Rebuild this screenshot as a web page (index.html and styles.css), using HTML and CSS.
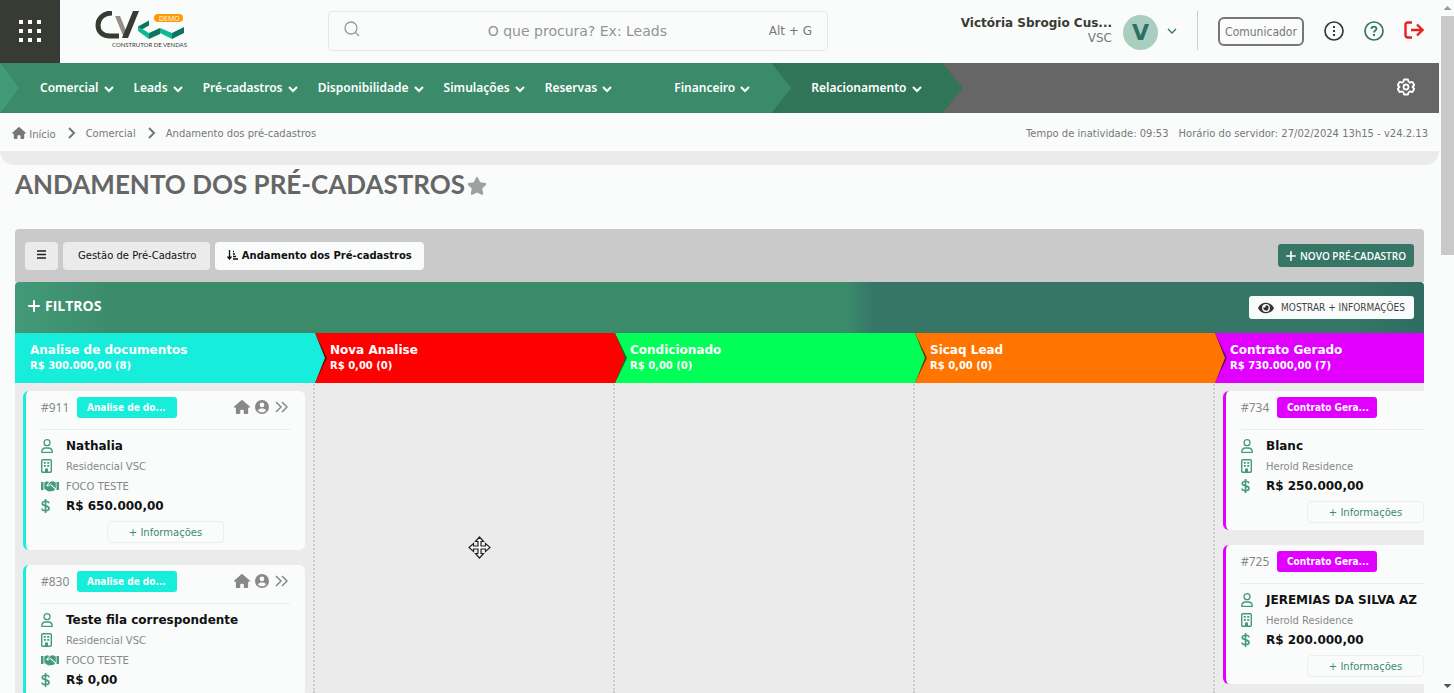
FILE: index.html
```
<!DOCTYPE html>
<html lang="pt-br">
<head>
    <meta charset="utf-8">
    <title>Andamento dos pré-cadastros</title>
    <link rel="stylesheet" href="styles.css">
</head>
<body>
    <svg class="sprite" aria-hidden="true">
        <symbol id="down" viewBox="0 0 10 8"><path d="M1 2l4 4 4-4" fill="none" stroke="currentColor" stroke-width="2"/></symbol>
        <symbol id="right" viewBox="0 0 8 12"><path d="M1 1l5 5-5 5" fill="none" stroke="currentColor" stroke-width="2"/></symbol>
        <symbol id="plus" viewBox="0 0 12 12"><path d="M6 1v10M1 6h10" fill="none" stroke="currentColor" stroke-width="2" stroke-linecap="round"/></symbol>
        <symbol id="home" viewBox="0 0 576 512"><path fill="currentColor" d="M575.8 255.5c0 18-15 32.1-32 32.1l-32 0 .7 160.2c0 2.7-.2 5.4-.5 8.1l0 16.2c0 22.1-17.9 40-40 40l-16 0c-1.1 0-2.2 0-3.3-.1c-1.4 .1-2.8 .1-4.2 .1L416 512l-24 0c-22.1 0-40-17.9-40-40l0-24 0-64c0-17.7-14.3-32-32-32l-64 0c-17.7 0-32 14.3-32 32l0 64 0 24c0 22.1-17.9 40-40 40l-24 0-31.9 0c-1.5 0-3-.1-4.5-.2c-1.2 .1-2.4 .2-3.6 .2l-16 0c-22.1 0-40-17.9-40-40l0-112c0-.9 0-1.9 .1-2.8l0-69.7-32 0c-18 0-32-14-32-32.1c0-9 3-17 10-24L266.4 8c7-7 15-8 22-8s15 2 21 7L564.8 231.5c8 7 12 15 11 24z"/></symbol>
        <symbol id="account" viewBox="0 0 14 14"><path fill="currentColor" fill-rule="evenodd" d="M7 0a7 7 0 1 1 0 14A7 7 0 0 1 7 0zM7 2.6a2.3 2.3 0 1 0 0 4.600a2.3 2.3 0 0 0 0-4.600zM2.900 10.200C3.700 11.700 5.200 12.300 7 12.300s3.300-.6 4.100-2.100C10.300 9 9 8.500 7 8.500S3.700 9 2.900 10.200z"/></symbol>
        <symbol id="more" viewBox="0 0 13 12"><path d="M1 1l5 5-5 5M7 1l5 5-5 5" fill="none" stroke="currentColor" stroke-width="1.500"/></symbol>
        <symbol id="person" viewBox="0 0 12 14"><g fill="none" stroke="currentColor" stroke-width="1.300"><circle cx="6" cy="3.700" r="3"/><path d="M.7 13.300c0-2.800 1.800-4.300 4-4.300h2.600c2.200 0 4 1.500 4 4.300z" stroke-linejoin="round"/></g></symbol>
        <symbol id="building" viewBox="0 0 11 14" preserveAspectRatio="xMinYMid"><rect x=".7" y=".7" width="9.600" height="12.600" rx="1" fill="none" stroke="currentColor" stroke-width="1.400"/><path fill="currentColor" d="M2.800 3h2v1.700h-2zM6.200 3h2v1.700h-2zM2.800 6h2v1.700h-2zM6.200 6h2v1.700h-2zM4 9.500h3V13H4z"/></symbol>
        <symbol id="handshake" viewBox="0 0 18 11"><path fill="currentColor" d="M0 1h2.500v8H0zM15.500 1H18v8h-2.500zM3.300 1.500L6 .3l2.500.8-3 3c-.5 1 1 1.800 2 1.100l1.800-1.200 4.500 4c.5.9-.4 1.500-1 1.200-.2.900-1.200 1.100-1.800.6-.5.8-1.500.8-2 .3-.9.700-2 .3-2.800-.4L3.300 7.700zM9.500.8l2.600-.5 2.700 1.200v6L9.700 3 8 4.200c-.5.3-1.100.1-1-.3z"/></symbol>
        <symbol id="dollar" viewBox="0 0 9 14" preserveAspectRatio="xMinYMid"><path d="M4.500 0v14M8 4.200C7.600 2.800 6.300 2.300 4.600 2.300 2.800 2.300 1.200 3 1.200 4.600c0 3.300 6.800 1.300 6.800 4.700 0 1.600-1.600 2.400-3.500 2.400C2.600 11.700 1.100 11 .8 9.600" fill="none" stroke="currentColor" stroke-width="1.600"/></symbol>
    </svg>

    <div class="page">
        <header class="header">
            <button class="apps" aria-label="Aplicativos">
                <svg width="24" height="24" viewBox="0 0 24 24" fill="#fff"><path d="M1 1h4v4H1zM10 1h4v4h-4zM19 1h4v4h-4zM1 10h4v4H1zM10 10h4v4h-4zM19 10h4v4h-4zM1 19h4v4H1zM10 19h4v4h-4zM19 19h4v4h-4z"/></svg>
            </button>
            <a class="logo" href="#">
                <svg width="96" height="38" viewBox="0 0 96 38">
                    <path d="M17 2C8 2 3 8 3 14c0 8 6 11 12 11h9" fill="none" stroke="#383b34" stroke-width="5"/>
                    <path d="M20 5h5l7 17-3 5z" fill="#968d8b"/>
                    <path d="M38 0h6L33 27h-6z" fill="#383b34"/>
                    <path d="M43 15.500l11-6v5L46 19z" fill="#0a7560"/>
                    <path d="M43 15.500l11 6.500v6L43 20z" fill="#0cba93"/>
                    <path d="M54 22l11-5v6l-11 5z" fill="#0a7560"/>
                    <path d="M65 17l12 5v6l-12-6z" fill="#0cba93"/>
                    <path d="M77 22l12-6v6l-12 6z" fill="#0a7560"/>
                    <rect x="59" y="3" width="29" height="8" rx="4" fill="#f90"/>
                    <text class="logo-tag" x="64" y="10" fill="#fff">DEMO</text>
                    <text class="logo-name" x="17" y="36" fill="#383b34">CONSTRUTOR DE VENDAS</text>
                </svg>
            </a>
            <label class="search">
                <svg width="16" height="16" viewBox="0 0 16 16" fill="none" stroke="#999" stroke-width="1.300"><circle cx="7" cy="7" r="6"/><path d="M11 11l4 4"/></svg>
                <input type="text" placeholder="O que procura? Ex: Leads" aria-label="Procurar">
                <span>Alt + G</span>
            </label>
            <div class="user">
                <div class="user-name">
                    <strong>Victória Sbrogio Cus...</strong>
                    <span>VSC</span>
                </div>
                <span class="avatar">V</span>
                <svg class="user-arrow" width="10" height="6" viewBox="0 0 10 6" fill="none" stroke="#357667" stroke-width="1.300"><path d="M1 1l4 4 4-4"/></svg>
            </div>
            <button class="comunicador">Comunicador</button>
            <button class="icon-button" aria-label="Opções"><svg width="20" height="20" viewBox="0 0 20 20"><circle cx="10" cy="10" r="9" fill="none" stroke="#383838" stroke-width="1.700"/><path d="M9 5h2v2H9zM9 9h2v2H9zM9 13h2v2H9z" fill="#383838"/></svg></button>
            <button class="icon-button" aria-label="Ajuda"><svg width="20" height="20" viewBox="0 0 20 20" fill="none" stroke="#357667" stroke-width="1.700"><circle cx="10" cy="10" r="9"/><path d="M7.500 8c0-3 5-3 5-.2 0 1.700-2.500 1.700-2.500 3.700" stroke-width="1.800"/><path d="M10 13v2" stroke-width="2"/></svg></button>
            <button class="icon-button" aria-label="Sair"><svg width="20" height="18" viewBox="0 0 20 18" fill="none" stroke="#e82020" stroke-width="2.400"><path d="M8 1.500H4q-2.500 0-2.500 2.500v10q0 2.500 2.500 2.500h4"/><path d="M7 9h12M13 3.500L18.500 9 13 14.500"/></svg></button>
        </header>

        <nav class="nav">
            <div class="nav-group">
                <a href="#">Comercial <svg><use href="#down"/></svg></a>
                <a href="#">Leads <svg><use href="#down"/></svg></a>
                <a href="#">Pré-cadastros <svg><use href="#down"/></svg></a>
                <a href="#">Disponibilidade <svg><use href="#down"/></svg></a>
                <a href="#">Simulações <svg><use href="#down"/></svg></a>
                <a href="#">Reservas <svg><use href="#down"/></svg></a>
                <a class="financeiro" href="#">Financeiro <svg><use href="#down"/></svg></a>
            </div>
            <div class="nav-group nav-dark">
                <a href="#">Relacionamento <svg><use href="#down"/></svg></a>
            </div>
            <button class="settings" aria-label="Configurações">
                <svg width="18" height="18" viewBox="0 0 18 18" fill="none" stroke="#fff" stroke-width="1.800"><path d="M7 1.500h4l.6 2.300 1.500.8 2.200-.8 2 3.400L15.500 9l1.800 1.800-2 3.400-2.200-.8-1.500.8-.6 2.300H7l-.6-2.300-1.500-.8-2.200.8-2-3.400L2.500 9 .7 7.200l2-3.400 2.200.8 1.500-.8z" stroke-linejoin="round"/><circle cx="9" cy="9" r="2.500"/></svg>
            </button>
        </nav>

        <div class="breadcrumb">
            <a href="#"><svg class="crumb-home"><use href="#home"/></svg> Início</a>
            <svg class="crumb-arrow"><use href="#right"/></svg>
            <a href="#">Comercial</a>
            <svg class="crumb-arrow"><use href="#right"/></svg>
            <a href="#">Andamento dos pré-cadastros</a>
            <div class="server">
                <span>Tempo de inatividade: 09:53</span>
                <span>Horário do servidor: 27/02/2024 13h15 - v24.2.13</span>
            </div>
        </div>
        <div class="band"></div>

        <main class="content">
            <h1>ANDAMENTO DOS PRÉ-CADASTROS
                <svg width="20" height="18" viewBox="0 0 576 512" fill="#a0a0a0"><path d="M259.3 17.800L194 150.200 47.900 171.500c-26.200 3.800-36.700 36.100-17.700 54.600l105.700 103-25 145.500c-4.500 26.300 23.200 46 46.400 33.700L288 439.600l130.700 68.700c23.200 12.200 50.900-7.400 46.400-33.700l-25-145.500 105.700-103c19-18.500 8.500-50.800-17.700-54.600L382 150.200 316.700 17.800c-11.700-23.600-45.600-23.900-57.400 0z"/></svg>
            </h1>

            <div class="toolbar">
                <button class="tab tab-menu" aria-label="Menu"><svg width="9" height="9" viewBox="0 0 9 9" stroke="#222" stroke-width="1.500"><path d="M0 1h9M0 4.500h9M0 8h9"/></svg></button>
                <button class="tab tab-gestao">Gestão de Pré-Cadastro</button>
                <button class="tab tab-active">
                    <svg width="11" height="10" viewBox="0 0 11 10" fill="none" stroke="#111" stroke-width="1.300"><path d="M2.500 0v9M.5 6.500l2 2.500 2-2.500M6 1.500h1M6 4h2M6 6.500h3M6 9h5"/></svg>
                    Andamento dos Pré-cadastros
                </button>
                <button class="novo"><svg><use href="#plus"/></svg>NOVO PRÉ-CADASTRO</button>
            </div>

            <div class="filters">
                <button class="filters-toggle"><svg><use href="#plus"/></svg>FILTROS</button>
                <button class="mostrar">
                    <svg width="16" height="14" viewBox="0 0 576 512" fill="#333"><path d="M572.520 241.400C518.290 135.590 410.930 64 288 64S57.680 135.640 3.480 241.410a32.350 32.350 0 0 0 0 29.190C57.710 376.410 165.070 448 288 448s230.320-71.640 284.520-177.410a32.350 32.350 0 0 0 0-29.190zM288 400a144 144 0 1 1 144-144 143.930 143.930 0 0 1-144 144zm0-240a95.310 95.310 0 0 0-25.310 3.790 47.850 47.850 0 0 1-66.900 66.900A95.780 95.780 0 1 0 288 160z"/></svg>
                    MOSTRAR + INFORMAÇÕES
                </button>
            </div>

            <div class="board">
                <section class="column cyan">
                    <div class="column-head"><h2>Analise de documentos</h2><p>R$ 300.000,00 (8)</p></div>
                    <article class="card">
                        <div class="card-head">
                            <span class="code">#911</span><span class="status">Analise de do...</span>
                            <svg class="i-home"><use href="#home"/></svg><svg class="i-account"><use href="#account"/></svg><svg class="i-more"><use href="#more"/></svg>
                        </div>
                        <p class="strong"><svg><use href="#person"/></svg>Nathalia</p>
                        <p><svg><use href="#building"/></svg>Residencial VSC</p>
                        <p><svg class="i-hand"><use href="#handshake"/></svg>FOCO TESTE</p>
                        <p class="strong"><svg><use href="#dollar"/></svg>R$ 650.000,00</p>
                        <button>+ Informações</button>
                    </article>
                    <article class="card">
                        <div class="card-head">
                            <span class="code">#830</span><span class="status">Analise de do...</span>
                            <svg class="i-home"><use href="#home"/></svg><svg class="i-account"><use href="#account"/></svg><svg class="i-more"><use href="#more"/></svg>
                        </div>
                        <p class="strong"><svg><use href="#person"/></svg>Teste fila correspondente</p>
                        <p><svg><use href="#building"/></svg>Residencial VSC</p>
                        <p><svg class="i-hand"><use href="#handshake"/></svg>FOCO TESTE</p>
                        <p class="strong"><svg><use href="#dollar"/></svg>R$ 0,00</p>
                    </article>
                </section>
                <section class="column red">
                    <div class="column-head"><h2>Nova Analise</h2><p>R$ 0,00 (0)</p></div>
                    <svg class="move-cursor" width="23" height="23" viewBox="0 0 23 23" fill="#fff" stroke="#222" stroke-width="1.200"><path d="M11.500 1l4 4.500h-2.500V10h4.500V7.500l4.500 4-4.500 4V13H13v4.500h2.500l-4 4.500-4-4.500H10V13H5.500v2.500l-4.500-4 4.500-4V10H10V5.500H7.500z"/></svg>
                </section>
                <section class="column green">
                    <div class="column-head"><h2>Condicionado</h2><p>R$ 0,00 (0)</p></div>
                </section>
                <section class="column orange">
                    <div class="column-head"><h2>Sicaq Lead</h2><p>R$ 0,00 (0)</p></div>
                </section>
                <section class="column pink">
                    <div class="column-head"><h2>Contrato Gerado</h2><p>R$ 730.000,00 (7)</p></div>
                    <article class="card">
                        <div class="card-head"><span class="code">#734</span><span class="status">Contrato Gera...</span></div>
                        <p class="strong"><svg><use href="#person"/></svg>Blanc</p>
                        <p><svg><use href="#building"/></svg>Herold Residence</p>
                        <p class="strong"><svg><use href="#dollar"/></svg>R$ 250.000,00</p>
                        <button>+ Informações</button>
                    </article>
                    <article class="card">
                        <div class="card-head"><span class="code">#725</span><span class="status">Contrato Gera...</span></div>
                        <p class="strong"><svg><use href="#person"/></svg>JEREMIAS DA SILVA AZ</p>
                        <p><svg><use href="#building"/></svg>Herold Residence</p>
                        <p class="strong"><svg><use href="#dollar"/></svg>R$ 200.000,00</p>
                        <button>+ Informações</button>
                    </article>
                </section>
            </div>
        </main>
    </div>

    <div class="scrollbar">
        <span class="arrow-up"></span>
        <div class="thumb"></div>
        <span class="arrow-down"></span>
    </div>
</body>
</html>
```
FILE: styles.css
```
* {
    box-sizing: border-box;
    margin: 0;
    padding: 0;
}

body {
    display: flex;
    height: 100vh;
    overflow: hidden;
    background: #fafcfb;
    color: #777;
    font-family: Verdana, "DejaVu Sans", sans-serif;
    font-size: 10px;
}

a {
    color: inherit;
    text-decoration: none;
}

button {
    border: none;
    background: none;
    font-family: inherit;
    cursor: pointer;
}

.sprite {
    position: absolute;
    width: 0;
    height: 0;
}

.page {
    flex: 1;
    min-width: 0;
    display: flex;
    flex-direction: column;
}

/* header */
.header {
    display: flex;
    align-items: center;
    height: 63px;
    flex-shrink: 0;
    padding: 0 15px 2px 0;
}

.apps {
    align-self: flex-start;
    width: 60px;
    height: 63px;
    background: #383b34;
    padding-top: 2px;
}

.logo {
    margin-left: 35px;
    height: 40px;
}

.logo-tag {
    font: 7px "Open Sans", sans-serif;
}

.logo-name {
    font: 6px Lato, sans-serif;
}

.search {
    display: flex;
    align-items: center;
    width: 500px;
    height: 40px;
    margin-left: 137px;
    padding: 0 15px;
    border: 1px solid #e6e8e7;
    border-radius: 4px;
}

.search svg {
    margin-bottom: 4px;
}

.search input {
    flex: 1;
    min-width: 0;
    padding-left: 26px;
    border: none;
    outline: none;
    background: none;
    text-align: center;
    font-family: inherit;
    font-size: 14px;
}

.search input::placeholder {
    color: #949494;
}

.search span {
    font-size: 12px;
}

.user {
    display: flex;
    align-items: center;
    height: 39px;
    margin-left: auto;
    padding-right: 20px;
    border-right: 1px solid #ccc;
}

.user-name {
    display: flex;
    flex-direction: column;
    align-items: flex-end;
    font-size: 12px;
    line-height: 15px;
}

.user-name strong {
    color: #383b34;
}

.avatar {
    width: 35px;
    height: 35px;
    margin: 4px 9px 0 11px;
    border-radius: 50%;
    background: #a9cdbe;
    color: #2d7065;
    font-size: 22px;
    font-weight: bold;
    line-height: 35px;
    text-align: center;
}

.comunicador {
    width: 86px;
    height: 29px;
    margin: 2px 20px 0;
    border: 2px solid #777;
    border-radius: 6px;
    color: #777;
    font-family: "DejaVu Sans Condensed", "DejaVu Sans", sans-serif;
    font-size: 12px;
}

.icon-button {
    height: 20px;
    width: 20px;
    margin-right: 20px;
}

.icon-button:last-child {
    margin-right: 0;
}

/* nav */
.nav {
    display: flex;
    height: 50px;
    flex-shrink: 0;
    background: #666;
    color: #fff;
}

.nav-group {
    position: relative;
    z-index: 1;
    display: flex;
    align-items: center;
    gap: 20px;
    padding: 0 41px 2px 40px;
    background: #3b8b6b;
    clip-path: polygon(0 0, calc(100% - 20px) 0, 100% 50%, calc(100% - 20px) 100%, 0 100%);
    font-family: "Noto Sans", sans-serif;
    font-size: 12px;
    font-weight: 600;
}

.nav-group:first-child::before {
    content: "";
    position: absolute;
    left: 0;
    top: 0;
    width: 19px;
    height: 50px;
    background: #439a78;
    clip-path: polygon(0 0, 100% 50%, 0 100%);
}

.nav-dark {
    z-index: 0;
    margin-left: -20px;
    background: #307557;
}

.nav a {
    white-space: nowrap;
}

.nav a svg {
    width: 10px;
    height: 8px;
    margin-left: 2px;
    vertical-align: -1px;
}

.nav .financeiro {
    margin-left: 42px;
}

.settings {
    margin: 0 24px 0 auto;
}

/* breadcrumb */
.breadcrumb {
    display: flex;
    align-items: center;
    height: 38px;
    flex-shrink: 0;
    padding: 2px 11px 0 12px;
}

.crumb-home {
    width: 14px;
    height: 12px;
    vertical-align: -1px;
}

.crumb-arrow {
    width: 8px;
    height: 12px;
    margin: 0 10px 0 12px;
}

.server {
    display: flex;
    gap: 10px;
    margin-left: auto;
}

.band {
    height: 14px;
    flex-shrink: 0;
    background: #ebebeb;
    border-radius: 0 0 14px 14px;
}

/* content */
.content {
    flex: 1;
    min-height: 0;
    display: flex;
    flex-direction: column;
    padding: 0 15px;
}

h1 {
    height: 64px;
    flex-shrink: 0;
    color: #666;
    font-family: Lato, sans-serif;
    font-size: 26px;
    font-weight: bold;
    line-height: 38px;
}

h1 svg {
    margin-left: -4px;
    vertical-align: -1px;
}

.toolbar {
    display: flex;
    align-items: center;
    gap: 5px;
    height: 53px;
    flex-shrink: 0;
    padding: 0 10px;
    background: #cacaca;
    border-radius: 4px 4px 0 0;
}

.tab {
    height: 28px;
    padding: 0 12px;
    background: #ebebeb;
    border-radius: 4px;
    color: #111;
    font-size: 10px;
}

.tab-gestao {
    padding: 0 14px 0 15px;
}

.tab-active {
    background: #fafcfb;
    font-weight: bold;
}

.tab-active svg {
    vertical-align: -1px;
}

.novo,
.mostrar {
    display: flex;
    align-items: center;
    height: 23px;
    margin-left: auto;
    padding: 0 9px;
    border-radius: 3px;
    background: #357667;
    color: #fff;
    font-family: "DejaVu Sans Condensed", "DejaVu Sans", sans-serif;
    font-size: 10px;
}

.novo {
    padding: 0 8px;
    font-family: "Open Sans", sans-serif;
    font-weight: 600;
}

.novo svg {
    width: 10px;
    height: 10px;
    margin-right: 4px;
}

.mostrar {
    gap: 7px;
    background: #fafcfb;
    color: #444;
}

.filters {
    display: flex;
    align-items: center;
    height: 51px;
    flex-shrink: 0;
    padding: 0 10px 0 13px;
    border-radius: 4px 4px 0 0;
    background: linear-gradient(90deg, #439a78, #3b8b6b 100px, #3b8b6b 59%, #357667 61%, #357667 95%, #2e6c62);
}

.filters-toggle {
    display: flex;
    align-items: center;
    gap: 5px;
    padding-bottom: 4px;
    color: #fff;
    font-family: "Open Sans", sans-serif;
    font-size: 14px;
    font-weight: bold;
}

.filters-toggle svg {
    width: 12px;
    height: 12px;
}

/* board */
.board {
    flex: 1;
    min-height: 0;
    display: flex;
    overflow: hidden;
    background: #ebebeb;
}

.column {
    position: relative;
    width: 300px;
    flex-shrink: 0;
    border-right: 2px dotted #ccc;
}

.column-head {
    position: relative;
    z-index: 1;
    height: 50px;
    margin-right: -2px;
    padding: 10px 15px;
    background: var(--color);
    color: #fff;
}

.column + .column .column-head::before,
.column + .column .column-head::after {
    content: "";
    position: absolute;
    left: 0;
    top: 0;
    width: 12px;
    height: 50px;
    background: rgba(0, 0, 0, 0.55);
    clip-path: polygon(0 0, 100% 50%, 0 100%);
}

.column + .column .column-head::after {
    width: 10px;
    background: var(--previous);
}

.column-head h2 {
    font-size: 12px;
    line-height: 15px;
}

.column-head p {
    font-weight: bold;
    line-height: 15px;
}

.cyan {
    --color: #16eddb;
}

.red {
    --color: #f00;
    --previous: #16eddb;
}

.green {
    --color: #00ff57;
    --previous: #f00;
}

.orange {
    --color: #ff7500;
    --previous: #00ff57;
}

.pink {
    --color: #e100ff;
    --previous: #ff7500;
}

/* cards */
.card {
    width: 282px;
    margin: 8px 0 15px 8px;
    padding: 0 15px 7px;
    border-left: 3px solid var(--color);
    border-radius: 6px;
    background: #fafcfb;
}

.card + .card {
    margin-top: 0;
}

.card-head {
    display: flex;
    align-items: center;
    height: 39px;
    margin-bottom: 6px;
    padding-bottom: 6px;
    border-bottom: 1px solid #ebebeb;
    color: #888;
}

.code {
    width: 36px;
    font-family: "Noto Sans", sans-serif;
    font-size: 12px;
}

.status {
    width: 100px;
    margin-right: auto;
    padding-left: 10px;
    border-radius: 3px;
    background: var(--color);
    color: #fff;
    font-family: "DejaVu Sans Condensed", "DejaVu Sans", sans-serif;
    font-weight: bold;
    line-height: 21px;
    white-space: nowrap;
}

.i-home {
    width: 16px;
    height: 14px;
}

.i-account {
    width: 14px;
    height: 14px;
    margin: 0 6px 0 5px;
}

.i-more {
    width: 13px;
    height: 12px;
    margin-right: 2px;
}

.card p {
    display: flex;
    align-items: center;
    gap: 13px;
    height: 20px;
    color: #888;
    white-space: nowrap;
}

.card p svg {
    width: 12px;
    height: 14px;
    color: #449a79;
}

.card p .i-hand {
    width: 18px;
    height: 11px;
    margin-right: -6px;
}

.card .strong {
    color: #111;
    font-size: 12px;
    font-weight: bold;
}

.card button {
    display: block;
    width: 117px;
    height: 22px;
    margin: 5px auto 0;
    border: 1px solid #ebefed;
    border-radius: 4px;
    color: #3b8b6b;
    font-size: 10px;
}

.move-cursor {
    position: absolute;
    left: 153px;
    top: 203px;
}

/* scrollbar */
.scrollbar {
    display: flex;
    flex-direction: column;
    align-items: center;
    width: 15px;
    padding: 6px 0 5px 2px;
}

.thumb {
    width: 100%;
    height: 35%;
    margin-top: 6px;
    background: #c9c9c9;
}

.arrow-up,
.arrow-down {
    width: 8px;
    height: 4px;
    background: #999;
    clip-path: polygon(50% 0, 100% 100%, 0 100%);
}

.arrow-down {
    margin-top: auto;
    background: #555;
    clip-path: polygon(0 0, 100% 0, 50% 100%);
}
```
